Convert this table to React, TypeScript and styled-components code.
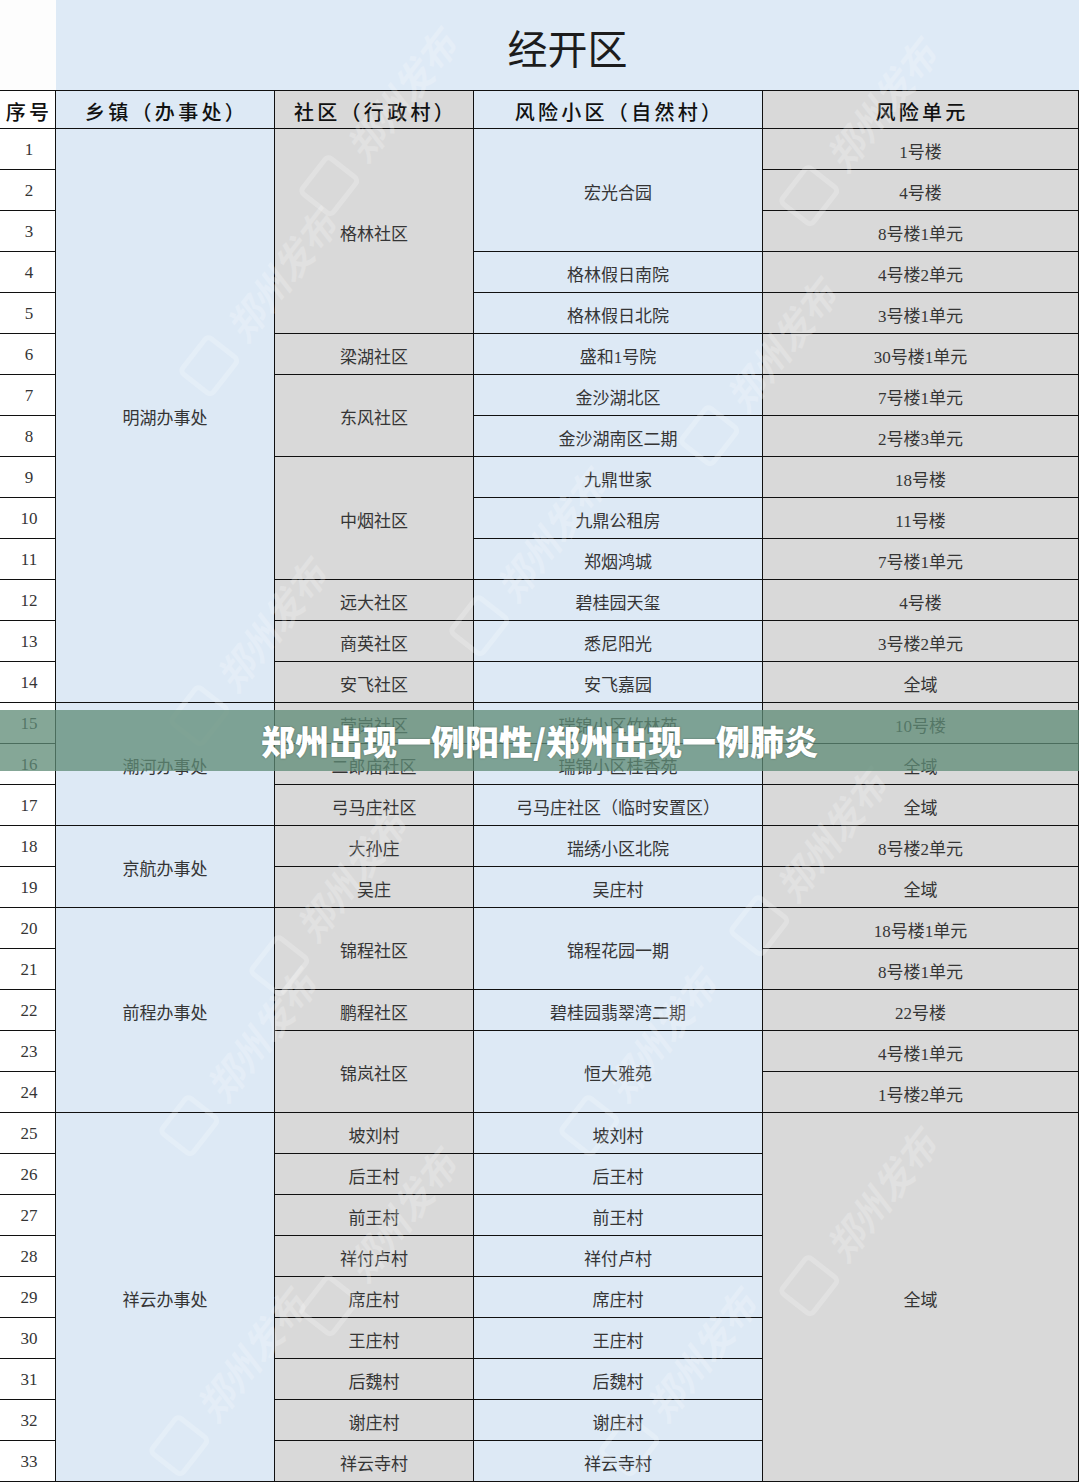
import React from "react";
import styled, { createGlobalStyle } from "styled-components";

const GlobalStyle = createGlobalStyle`
  html, body {
    margin: 0;
    padding: 0;
    background: #fff;
  }
  body {
    font-family: "Liberation Serif", "Noto Sans CJK SC", serif;
  }
`;

const BLUE = "#dde9f5";
const GRAY = "#d9d9d9";
const WHITE = "#ffffff";
const LINE = "#101010";
const MARK = "rgba(255, 255, 255, 0.22)";

const Page = styled.div`
  position: relative;
  width: 1079px;
  height: 1482px;
  overflow: hidden;
`;

const TitleRow = styled.div`
  display: flex;
  height: 90px;
`;

const Corner = styled.div`
  width: 56px;
  background: #fdfdfd;
`;

const TitleCell = styled.div`
  flex: 1;
  background: #deeaf6;
  display: flex;
  align-items: center;
  justify-content: center;
  font-family: "Noto Sans CJK SC", sans-serif;
  font-size: 40px;
  color: #1c1c1c;
  padding-top: 3px;
`;

const Table = styled.div`
  display: grid;
  grid-template-columns: 56px 219px 199px 289px 316px;
  grid-template-rows: 38px repeat(33, 41px);
  border-top: 1px solid ${LINE};
`;

const Cell = styled.div<{ $col: number; $row: number; $span?: number; $bg: string }>`
  grid-column: ${(p) => p.$col};
  grid-row: ${(p) => p.$row} / span ${(p) => p.$span ?? 1};
  background: ${(p) => p.$bg};
  border-right: 1px solid ${LINE};
  border-bottom: 1px solid ${LINE};
  box-sizing: border-box;
  display: flex;
  align-items: center;
  justify-content: center;
  padding-top: 2px;
  font-size: 17px;
  color: #353535;
  white-space: nowrap;
`;

const NumCell = styled(Cell)`
  padding-left: 3px;
`;

const HeadCell = styled(Cell)`
  font-family: "Noto Sans CJK SC", sans-serif;
  font-size: 20px;
  font-weight: 500;
  color: #111;
  letter-spacing: 3.3px;
  padding-left: 3px;
  padding-top: 3px;
`;

const Watermark = styled.div<{ $x: number; $y: number }>`
  position: absolute;
  left: ${(p) => p.$x}px;
  top: ${(p) => p.$y}px;
  display: flex;
  align-items: center;
  gap: 14px;
  white-space: nowrap;
  transform: translate(-50%, -50%) rotate(-52deg);
  color: ${MARK};
  font-family: "Noto Sans CJK SC", sans-serif;
  font-size: 38px;
  font-weight: 700;
  font-style: italic;
  pointer-events: none;
`;

const WatermarkLogo = styled.div`
  width: 40px;
  height: 34px;
  border: 5px solid ${MARK};
  border-radius: 7px;
`;

const Banner = styled.div`
  position: absolute;
  left: 0;
  right: 0;
  top: 710px;
  height: 61px;
  background: rgba(95, 139, 118, 0.76);
  display: flex;
  align-items: center;
  justify-content: center;
  color: #fff;
  font-family: "Noto Sans CJK SC", sans-serif;
  font-weight: 900;
  font-size: 34px;
  text-shadow: 0 0 2px rgba(0, 0, 0, 0.35);
`;

type Group = [string, number];

const villages = ["坡刘村", "后王村", "前王村", "祥付卢村", "席庄村", "王庄村", "后魏村", "谢庄村", "祥云寺村"];

const towns: Group[] = [
  ["明湖办事处", 14],
  ["潮河办事处", 3],
  ["京航办事处", 2],
  ["前程办事处", 5],
  ["祥云办事处", 9],
];

const communities: Group[] = [
  ["格林社区", 5],
  ["梁湖社区", 1],
  ["东风社区", 2],
  ["中烟社区", 3],
  ["远大社区", 1],
  ["商英社区", 1],
  ["安飞社区", 1],
  ["营岗社区", 1],
  ["二郎庙社区", 1],
  ["弓马庄社区", 1],
  ["大孙庄", 1],
  ["吴庄", 1],
  ["锦程社区", 2],
  ["鹏程社区", 1],
  ["锦岚社区", 2],
  ...villages.map((v): Group => [v, 1]),
];

const estates: Group[] = [
  ["宏光合园", 3],
  ["格林假日南院", 1],
  ["格林假日北院", 1],
  ["盛和1号院", 1],
  ["金沙湖北区", 1],
  ["金沙湖南区二期", 1],
  ["九鼎世家", 1],
  ["九鼎公租房", 1],
  ["郑烟鸿城", 1],
  ["碧桂园天玺", 1],
  ["悉尼阳光", 1],
  ["安飞嘉园", 1],
  ["瑞锦小区竹林苑", 1],
  ["瑞锦小区桂香苑", 1],
  ["弓马庄社区（临时安置区）", 1],
  ["瑞绣小区北院", 1],
  ["吴庄村", 1],
  ["锦程花园一期", 2],
  ["碧桂园翡翠湾二期", 1],
  ["恒大雅苑", 2],
  ...villages.map((v): Group => [v, 1]),
];

const units: Group[] = [
  ["1号楼", 1],
  ["4号楼", 1],
  ["8号楼1单元", 1],
  ["4号楼2单元", 1],
  ["3号楼1单元", 1],
  ["30号楼1单元", 1],
  ["7号楼1单元", 1],
  ["2号楼3单元", 1],
  ["18号楼", 1],
  ["11号楼", 1],
  ["7号楼1单元", 1],
  ["4号楼", 1],
  ["3号楼2单元", 1],
  ["全域", 1],
  ["10号楼", 1],
  ["全域", 1],
  ["全域", 1],
  ["8号楼2单元", 1],
  ["全域", 1],
  ["18号楼1单元", 1],
  ["8号楼1单元", 1],
  ["22号楼", 1],
  ["4号楼1单元", 1],
  ["1号楼2单元", 1],
  ["全域", 9],
];

const columns: { groups: Group[]; bg: string }[] = [
  { groups: towns, bg: BLUE },
  { groups: communities, bg: GRAY },
  { groups: estates, bg: BLUE },
  { groups: units, bg: GRAY },
];

const headers: [string, string][] = [
  ["序号", WHITE],
  ["乡镇（办事处）", BLUE],
  ["社区（行政村）", GRAY],
  ["风险小区（自然村）", BLUE],
  ["风险单元", GRAY],
];

const watermarks: [number, number][] = [
  [380, 120],
  [860, 130],
  [260, 300],
  [760, 370],
  [530, 560],
  [250, 650],
  [810, 860],
  [330, 900],
  [640, 1060],
  [240, 1060],
  [860, 1220],
  [380, 1240],
  [230, 1380],
  [680, 1380],
];

const App = () => {
  const serials = Array.from({ length: 33 }, (_, i) => i + 1);

  return (
    <Page>
      <GlobalStyle />
      <TitleRow>
        <Corner />
        <TitleCell>经开区</TitleCell>
      </TitleRow>
      <Table>
        {headers.map(([label, bg], i) => (
          <HeadCell key={label} $col={i + 1} $row={1} $bg={bg}>
            {label}
          </HeadCell>
        ))}
        {serials.map((n) => (
          <NumCell key={`n${n}`} $col={1} $row={n + 1} $bg={WHITE}>
            {n}
          </NumCell>
        ))}
        {columns.map((column, ci) => {
          let row = 2;
          return column.groups.map(([label, span], gi) => {
            const start = row;
            row += span;
            return (
              <Cell key={`${ci}-${gi}`} $col={ci + 2} $row={start} $span={span} $bg={column.bg}>
                {label}
              </Cell>
            );
          });
        })}
      </Table>
      {watermarks.map(([x, y], i) => (
        <Watermark key={i} $x={x} $y={y} aria-hidden="true">
          <WatermarkLogo />
          <span>郑州发布</span>
        </Watermark>
      ))}
      <Banner>郑州出现一例阳性/郑州出现一例肺炎</Banner>
    </Page>
  );
};

export default App;
